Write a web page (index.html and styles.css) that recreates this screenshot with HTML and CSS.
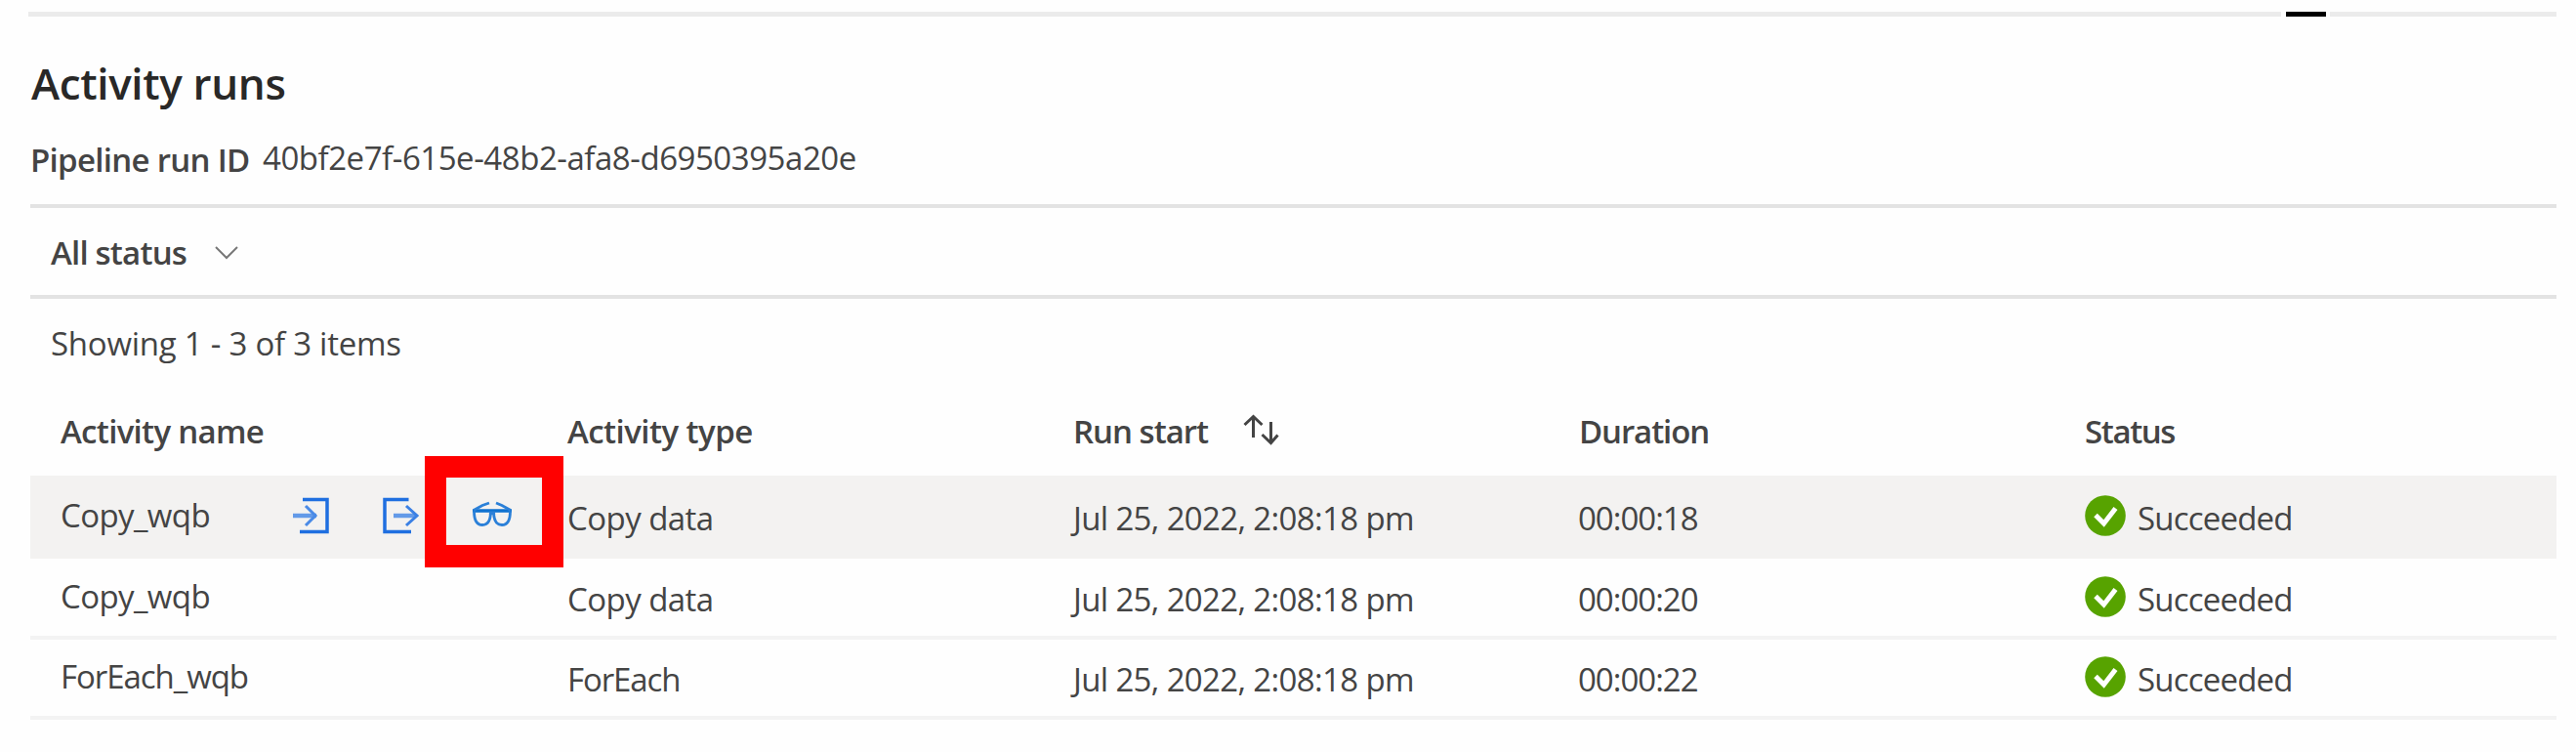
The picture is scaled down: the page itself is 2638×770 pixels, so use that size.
FILE: index.html
```
<!DOCTYPE html>
<html lang="en">
<head>
<meta charset="utf-8">
<title>Activity runs</title>
<link rel="stylesheet" href="styles.css">
</head>
<body>
<svg class="defs" width="0" height="0" aria-hidden="true">
  <symbol id="check" viewBox="0 0 42 42">
    <circle cx="21" cy="21" r="20.8" fill="#57a300"/>
    <path d="M11 20.500l8.500 8.500L31.500 13.500" fill="none" stroke="#fff" stroke-width="5"/>
  </symbol>
</svg>
<main class="page">
  <div class="splitter"><span class="handle"></span></div>
  <h1 class="title"><span>Activity runs</span></h1>
  <div class="run-id"><span class="label">Pipeline run ID</span><span class="value">40bf2e7f-615e-48b2-afa8-d6950395a20e</span></div>
  <div class="filter">
    <span class="filter-text">All status</span>
    <svg class="chevron" width="26" height="16" viewBox="0 0 26 16"><path d="M2 2l11 11L24 2" fill="none" stroke="#777" stroke-width="2"/></svg>
  </div>
  <div class="count"><span>Showing 1 - 3 of 3 items</span></div>
  <section class="table">
    <div class="row head">
      <div class="cell"><span class="h-name">Activity name</span></div>
      <div class="cell"><span class="h-type">Activity type</span></div>
      <div class="cell"><span class="h-start">Run start</span>
        <svg class="sort" width="38" height="34" viewBox="0 0 38 34" fill="none" stroke="#444" stroke-width="3"><path d="M11.500 24V3M2.500 11l9-8.500 9 8.500M29.500 8v21M20.500 21l9 8.500 7-8"/></svg></div>
      <div class="cell"><span class="h-duration">Duration</span></div>
      <div class="cell"><span class="h-status">Status</span></div>
    </div>
    <div class="row active">
      <div class="cell"><span class="name">Copy_wqb</span>
        <div class="actions">
          <svg width="40" height="40" viewBox="0 0 40 40" fill="none"><path d="M1 21h24" stroke="#639ae8" stroke-width="4.500"/><path d="M14 11l10 10-10 10" stroke="#4a8ae6" stroke-width="3"/><path d="M11 4.500h25v33H8" stroke="#1f6fe0" stroke-width="3.500"/></svg>
          <svg width="40" height="40" viewBox="0 0 40 40" fill="none"><path d="M12 21h23" stroke="#639ae8" stroke-width="4.500"/><path d="M25 11l11 10-11 10" stroke="#3b80e4" stroke-width="3"/><path d="M27.500 4.500H3v33h27" stroke="#1f6fe0" stroke-width="3.500"/></svg>
          <svg class="glasses" width="44" height="28" viewBox="0 0 44 28" fill="none" stroke="#2b80d8" stroke-width="2.800"><path d="M2 10h40" stroke="#0f72d0" stroke-width="3.500"/><path d="M3.500 10.500c0 9.500 2.500 14 8.500 14s8.500-5 8.500-14M23.500 10.500c0 9 2.500 14 8.500 14s8.500-4.500 8.500-14M3 9.500L12 4.500l7-2.500M41 9.500L32 4.500l-6-2.500M19.500 14q2.500-2.500 5 0"/></svg>
        </div>
        <div class="callout"></div>
      </div>
      <div class="cell"><span class="type">Copy data</span></div>
      <div class="cell"><span class="date">Jul 25, 2022, 2:08:18 pm</span></div>
      <div class="cell"><span class="duration">00:00:18</span></div>
      <div class="cell"><svg class="check" width="42" height="42"><use href="#check"/></svg><span class="status">Succeeded</span></div>
    </div>
    <div class="row">
      <div class="cell"><span class="name">Copy_wqb</span></div>
      <div class="cell"><span class="type">Copy data</span></div>
      <div class="cell"><span class="date">Jul 25, 2022, 2:08:18 pm</span></div>
      <div class="cell"><span class="duration">00:00:20</span></div>
      <div class="cell"><svg class="check" width="42" height="42"><use href="#check"/></svg><span class="status">Succeeded</span></div>
    </div>
    <div class="row">
      <div class="cell"><span class="name name-long">ForEach_wqb</span></div>
      <div class="cell"><span class="type type-loop">ForEach</span></div>
      <div class="cell"><span class="date">Jul 25, 2022, 2:08:18 pm</span></div>
      <div class="cell"><span class="duration">00:00:22</span></div>
      <div class="cell"><svg class="check" width="42" height="42"><use href="#check"/></svg><span class="status">Succeeded</span></div>
    </div>
  </section>
</main>
</body>
</html>
```
FILE: styles.css
```
* { box-sizing: border-box; }
body {
  margin: 0;
  background: #fefefe;
  color: #444;
  font-family: "Open Sans", "Noto Sans", sans-serif;
  font-size: 33px;
  line-height: 46px;
  white-space: nowrap;
}
.defs { display: block; height: 0; }
.page { width: 2618px; height: 770px; padding: 12px 0 0 31px; }
.splitter { height: 5px; margin-left: -2px; background: #ebebeb; padding-left: 2307px; }
.handle { display: block; width: 50px; height: 5px; background: #000; border: solid #fefefe; border-width: 0 4px 0 5px; }
.title {
  margin: 38px 0 0;
  padding-left: 1px;
  height: 61px;
  font-size: 44px;
  line-height: 60px;
  font-weight: 600;
  color: #292827;
  letter-spacing: -0.35px;
}
.run-id { display: flex; height: 97px; padding: 23px 0 0 0; border-bottom: 4px solid #e3e3e3; }
.label { width: 238px; padding-top: 2px; font-weight: 600; letter-spacing: -0.7px; }
.value { letter-spacing: -0.46px; }
.filter { display: flex; height: 93px; padding: 23px 0 0 21px; border-bottom: 4px solid #e3e3e3; }
.filter-text { width: 167px; font-weight: 600; letter-spacing: -0.8px; }
.chevron { margin-top: 15px; }
.count { height: 79px; padding: 23px 0 0 21px; letter-spacing: -0.25px; }
.row {
  display: grid;
  grid-template-columns: 520px 518px 518px 518px auto;
  padding-left: 30px;
  height: 82px;
  border-bottom: 4px solid #f3f3f3;
}
.cell { position: relative; display: flex; padding-top: 15px; }
.head { height: 102px; border: 0; font-weight: 600; }
.head .cell { padding-top: 34px; }
.h-name { margin-left: 1px; letter-spacing: -0.7px; }
.h-type { letter-spacing: -0.55px; }
.h-start { width: 173px; letter-spacing: -1px; }
.h-duration { letter-spacing: -1.1px; }
.h-status { letter-spacing: -1.4px; }
.sort { margin-top: 5px; }
.active { height: 85px; background: #f3f2f1; border-color: #f3f2f1; }
.active + .row { height: 83px; padding-top: 1px; }
.active .cell { padding-top: 18px; }
.name { margin: 0 0 0 1px; width: 237px; letter-spacing: -0.6px; }
.name-long { letter-spacing: -1.05px; }
.type, .date, .duration, .status { margin-top: 3px; letter-spacing: -0.65px; }
.type { letter-spacing: -0.55px; }
.type-loop { letter-spacing: -1.1px; }
.duration { margin-left: -1px; letter-spacing: -1px; }
.status { letter-spacing: -0.8px; }
.actions { display: flex; gap: 52px; margin-top: 2px; }
.glasses { margin: 6px 0 0 -1px; }
.callout {
  position: absolute;
  left: 374px;
  top: -20px;
  width: 142px;
  height: 114px;
  border: 22px solid #f00;
  border-bottom-width: 23px;
}
.check { margin: 2px 12px 0 0; }
```
